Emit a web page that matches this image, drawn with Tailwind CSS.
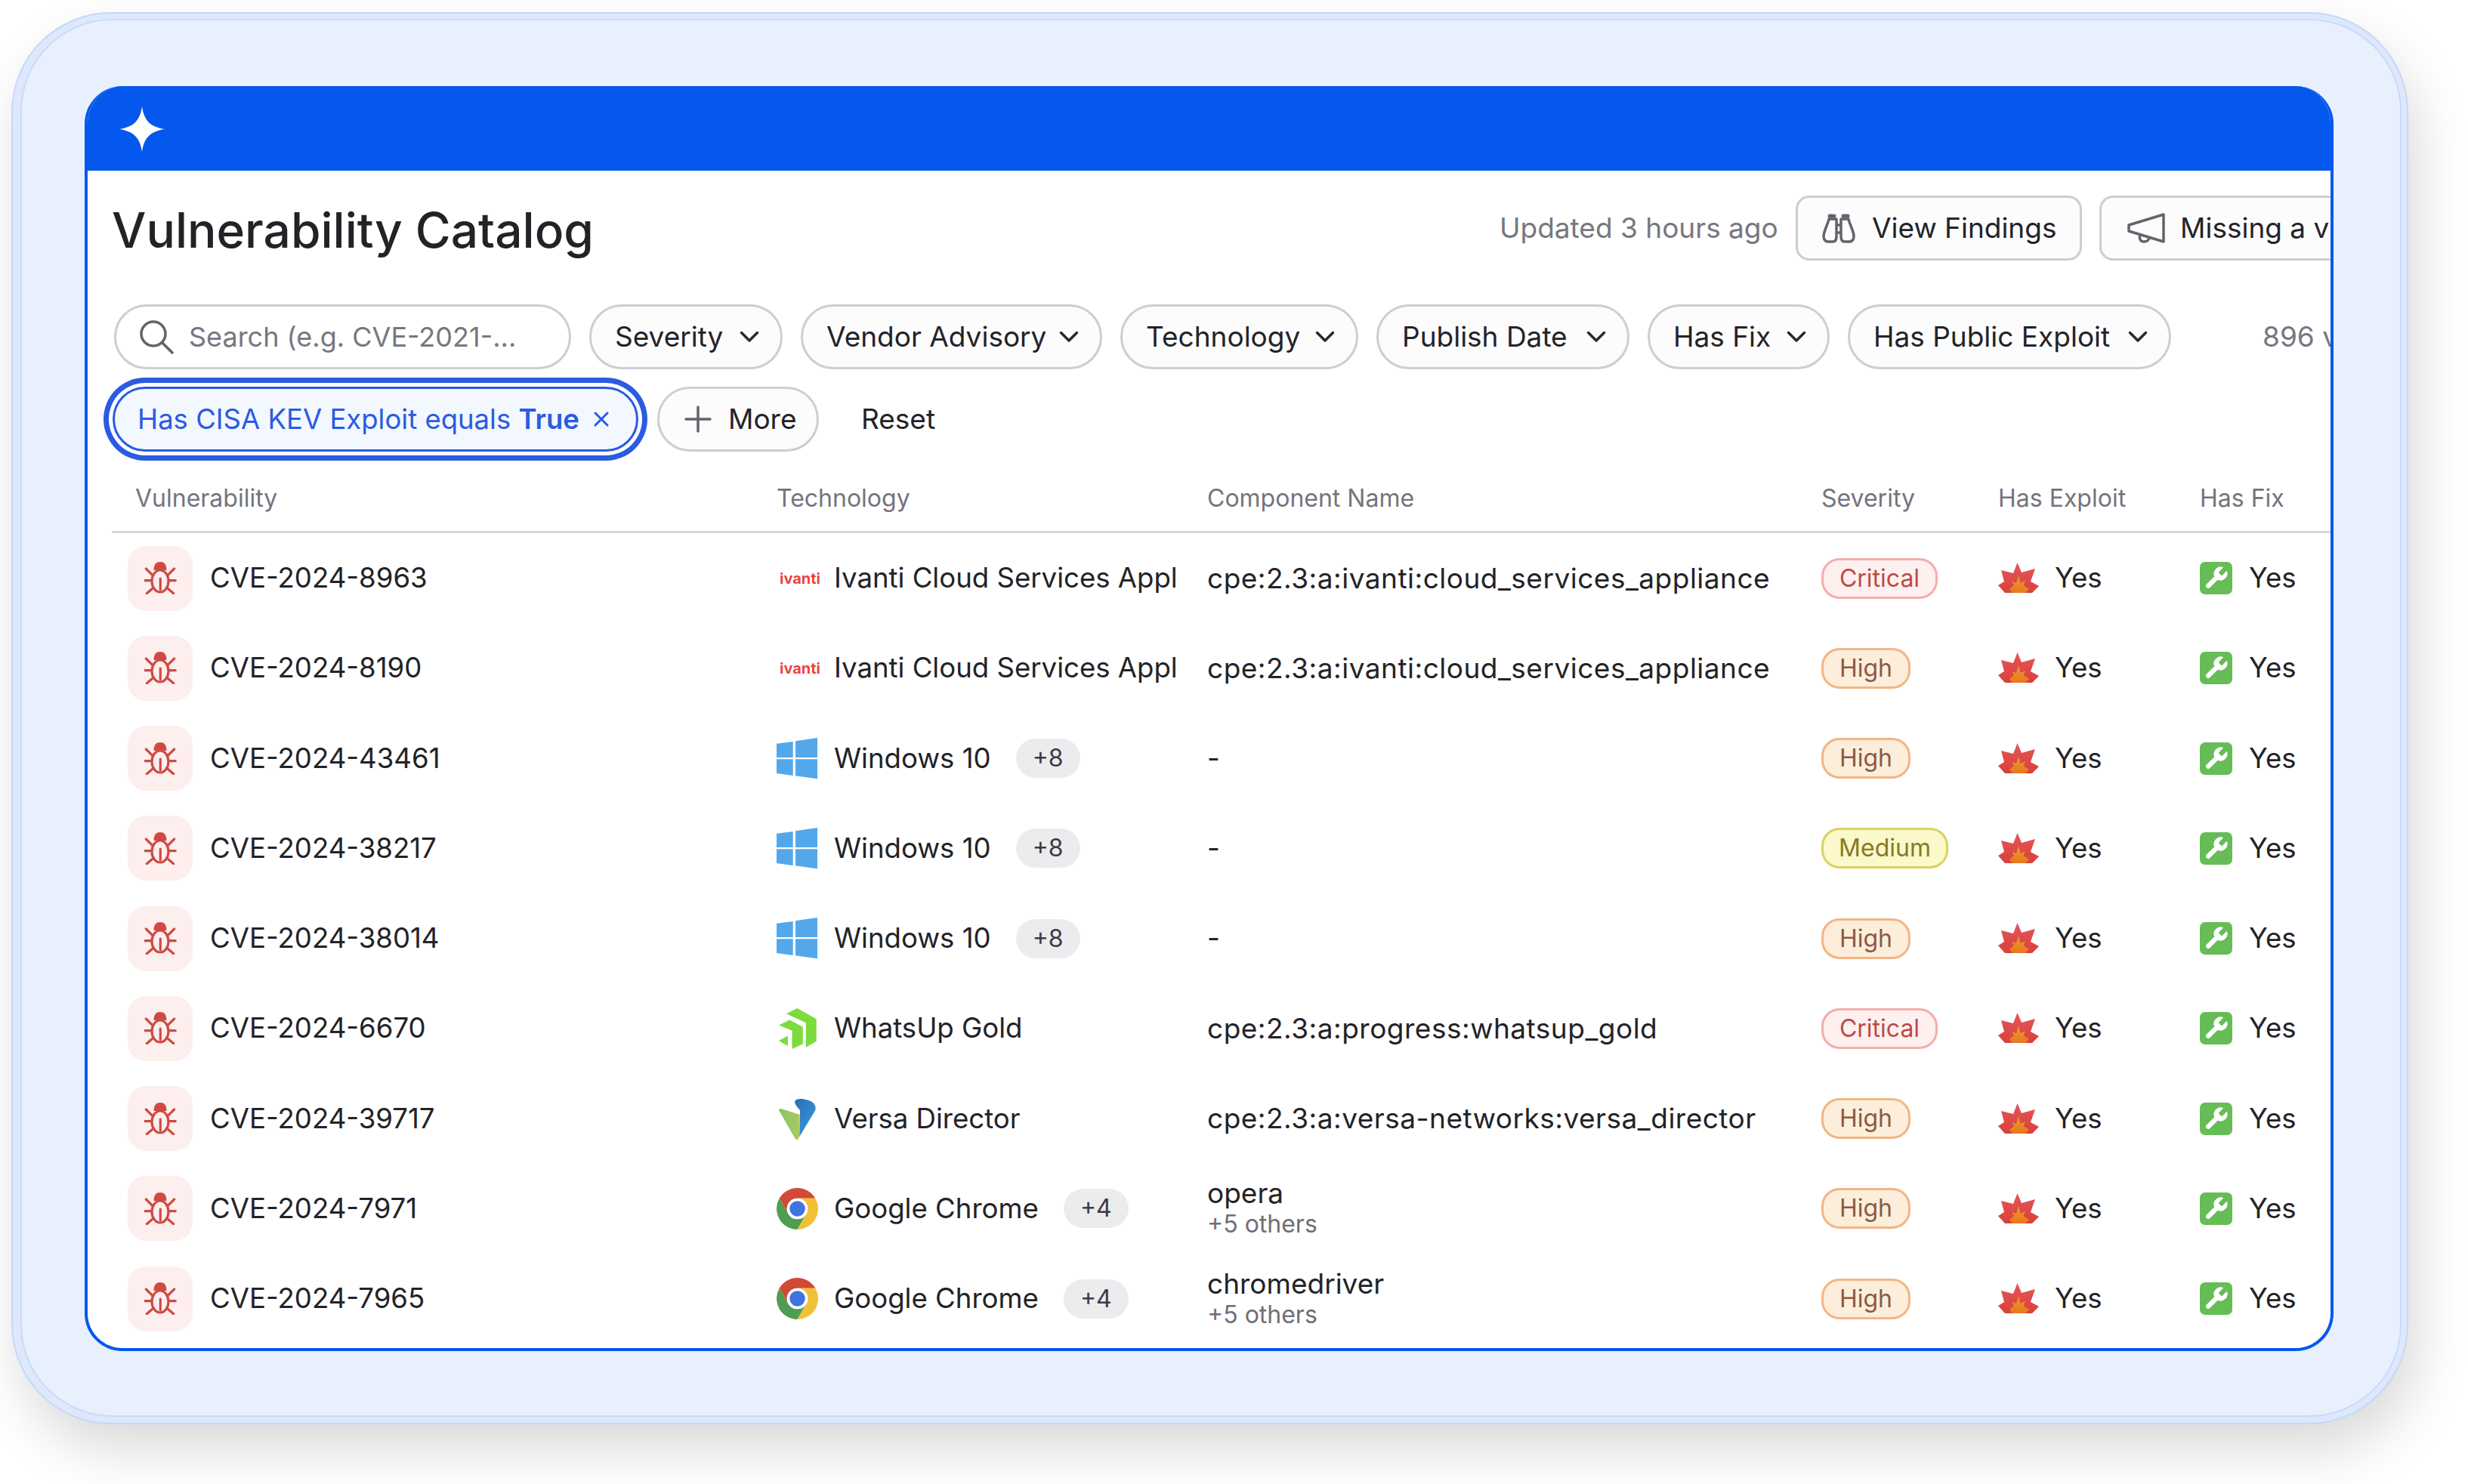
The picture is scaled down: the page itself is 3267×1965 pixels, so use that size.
<!doctype html>
<html>
<head>
<meta charset="utf-8">
<script src="https://cdn.jsdelivr.net/npm/@tailwindcss/browser@4"></script>
<title>Vulnerability Catalog</title>
</head>
<body class="bg-white">
<svg class="absolute w-0 h-0" aria-hidden="true">
  <defs>
    <linearGradient id="fl" x1="0" y1="0" x2="0" y2="1"><stop offset="0" stop-color="#e6555a"/><stop offset="1" stop-color="#d8413a"/></linearGradient>
    <linearGradient id="fi" x1="0" y1="0" x2="0" y2="1"><stop offset="0" stop-color="#e9a12a"/><stop offset="1" stop-color="#e8761f"/></linearGradient>
    <linearGradient id="vb" x1="0" y1="0" x2="1" y2="1"><stop offset="0" stop-color="#2a6cbc"/><stop offset="1" stop-color="#3d9cd9"/></linearGradient>
    <linearGradient id="vg" x1="0" y1="0" x2="1" y2="0"><stop offset="0" stop-color="#8bc45b"/><stop offset="1" stop-color="#a9c966"/></linearGradient>
    <symbol id="bug" viewBox="0 0 43 43">
      <path d="M12.500 11C12.500 3 16 0 21 0 26 0 29.500 3 29.500 11Z" fill="#cf4a44"/>
      <ellipse cx="21" cy="25.500" rx="11" ry="14.500" fill="none" stroke="#cf4a44" stroke-width="3.200"/>
      <path d="M21.300 22V37M2.300 9 10.700 17.300M39.700 9 31.300 17.300M.7 24.700H9.700M41.300 24.700H32.300M3.300 41.700 12.300 34M38.700 41.700 29.700 34" fill="none" stroke="#cf4a44" stroke-width="3.200" stroke-linecap="round"/>
    </symbol>
    <symbol id="win" viewBox="0 0 54 55">
      <path d="M0 7.700 21.700 5v21H0zM25 4.300 54 0v26H25zM0 28.300h21.700V50L0 47zM25 28.300h29v26l-29-4z" fill="#53a8ec"/>
    </symbol>
    <symbol id="flame" viewBox="0 0 54 41">
      <path d="M0 30 8 25 4 10 20 14 25.500 0 31 13 49 8 43 25 54 31 45 40H9z" fill="url(#fl)"/>
      <path d="M15 35 21 30 18.500 25 24 27 27 17 29.500 27 36 24 33.500 30 41 35 36 40H19z" fill="url(#fi)"/>
    </symbol>
    <symbol id="fix" viewBox="0 0 43 43">
      <rect width="43" height="43" rx="7" fill="#66bc55"/>
      <g transform="translate(3.500 3.500) scale(1.5)">
        <path d="M14.700 6.300a1 1 0 0 0 0 1.400l1.600 1.600a1 1 0 0 0 1.400 0l3.770-3.770a6 6 0 0 1-7.940 7.940l-6.910 6.910a2.120 2.120 0 0 1-3-3l6.910-6.910a6 6 0 0 1 7.940-7.940l-3.760 3.760z" fill="#fff"/>
      </g>
    </symbol>
    <symbol id="chrome" viewBox="0 0 48 48">
      <circle cx="24" cy="24" r="24" fill="#fff"/>
      <path d="M44.800 12A24 24 0 0 0 3.200 12L13.600 30A12 12 0 0 1 24 12Z" fill="#d04a36"/>
      <path d="M3.200 12A24 24 0 0 0 24 48L34.400 30A12 12 0 0 1 13.600 30Z" fill="#4f9d52"/>
      <path d="M24 48A24 24 0 0 0 44.800 12H24A12 12 0 0 1 34.400 30Z" fill="#f2c038"/>
      <circle cx="24" cy="24" r="12" fill="#fff"/>
      <circle cx="24" cy="24" r="9" fill="#3f74e0"/>
    </symbol>
    <symbol id="chev" viewBox="0 0 26 16">
      <path d="M2.500 2.500 13 13 23.500 2.500" fill="none" stroke="#2a2a2e" stroke-width="3.500" stroke-linecap="round" stroke-linejoin="round"/>
    </symbol>
  </defs>
</svg>

<div class="w-[3267px] h-[1965px] overflow-hidden pl-[15px] pt-[16px] font-['Inter',sans-serif] text-[#232327]">
  <div class="w-[3173px] h-[1870px] rounded-[132px] bg-[#dde8fc] border-2 border-[#c4d8f9] shadow-[12px_34px_70px_rgba(0,0,0,0.15)] pl-[10px] pr-[7px] pt-[7px] pb-[8px]">
    <div class="w-full h-full rounded-[122px] bg-[#e8f0fe] border-2 border-[#c9dbfa] pl-[83px] pr-[88px] pt-[87px] pb-[85px]">
      <div class="w-[2977px] h-[1675px] rounded-[50px] overflow-hidden bg-white flex flex-col border-[4px] border-t-0 border-[#0558ee]">
        <div class="h-[112px] shrink-0 bg-[#0558ee] -mx-[4px] pl-[46px] flex items-center">
          <svg class="w-[60px] h-[60px] mt-[2px]" viewBox="0 0 60 60"><path d="M30 0C33 20 42 27 60 30 42 33 33 40 30 60 27 40 18 33 0 30 18 27 27 20 30 0Z" fill="#fff"/></svg>
        </div>
        <div class="flex-1 flex flex-col overflow-hidden pl-[32px]">
          <!-- Title row -->
          <div class="flex items-center h-[86px] mt-[33px] shrink-0 whitespace-nowrap">
            <h1 class="text-[64px] font-medium w-[1837px] shrink-0 mt-[6px]">Vulnerability Catalog</h1>
            <span class="text-[37px] text-[#77777f] w-[392px] shrink-0">Updated 3 hours ago</span>
            <button class="h-[86px] w-[379px] shrink-0 rounded-[18px] border-[3px] border-[#cdcdd4] bg-[#fcfcfd] flex items-center pl-[32px] gap-[22px] text-[37px]">
              <svg class="w-[44px] h-[40px]" viewBox="0 0 44 40" fill="none" stroke="#63636b" stroke-width="3.500" stroke-linejoin="round"><path d="M9 8c-1 6-6 14-7 22 0 5 2 8 6 8h6c4 0 5-3 5-7V8zM35 8c1 6 6 14 7 22 0 5-2 8-6 8h-6c-4 0-5-3-5-7V8zM19 16h6v10h-6z"/><path d="M10 4h6M28 4h6" stroke-width="5" stroke-linecap="round"/></svg>
              <span>View Findings</span>
            </button>
            <button class="h-[86px] w-[400px] shrink-0 ml-[23px] rounded-l-[18px] border-[3px] border-r-0 border-[#cdcdd4] bg-[#fcfcfd] flex items-center pl-[33px] gap-[19px] text-[37px] overflow-hidden">
              <svg class="w-[52px] h-[40px] shrink-0" viewBox="0 0 52 40" fill="none" stroke="#63636b" stroke-width="3.500" stroke-linejoin="round"><path d="M49 2v36L3 24v-8zM3 16v8M18 28c-2 7 1 10 5 10s7-2 7-6"/></svg>
              <span>Missing a vulnerability?</span>
            </button>
          </div>
          <!-- Filters row -->
          <div class="flex items-center gap-[24px] mt-[58px] ml-[3px] h-[86px] shrink-0 whitespace-nowrap text-[37px]">
            <div class="w-[605px] h-[86px] shrink-0 rounded-full border-[3px] border-[#cdcdd4] bg-white flex items-center pl-[30px] gap-[20px] text-[36px] text-[#77777f]">
              <svg class="w-[46px] h-[46px] shrink-0" viewBox="0 0 46 46" fill="none" stroke="#63636b" stroke-width="3.500" stroke-linecap="round"><circle cx="19" cy="19" r="16"/><path d="M31 31 44 44"/></svg>
              <span>Search (e.g. CVE-2021-...</span>
            </div>
            <div class="w-[256px] h-[86px] shrink-0 rounded-full border-[3px] border-[#cdcdd4] bg-[#fcfcfd] flex items-center justify-between pl-[31px] pr-[28px]"><span>Severity</span><svg class="w-[26px] h-[16px]"><use href="#chev"/></svg></div>
            <div class="w-[399px] h-[86px] shrink-0 rounded-full border-[3px] border-[#cdcdd4] bg-[#fcfcfd] flex items-center justify-between pl-[31px] pr-[28px]"><span>Vendor Advisory</span><svg class="w-[26px] h-[16px]"><use href="#chev"/></svg></div>
            <div class="w-[315px] h-[86px] shrink-0 rounded-full border-[3px] border-[#cdcdd4] bg-[#fcfcfd] flex items-center justify-between pl-[31px] pr-[28px]"><span>Technology</span><svg class="w-[26px] h-[16px]"><use href="#chev"/></svg></div>
            <div class="w-[335px] h-[86px] shrink-0 rounded-full border-[3px] border-[#cdcdd4] bg-[#fcfcfd] flex items-center justify-between pl-[31px] pr-[28px]"><span>Publish Date</span><svg class="w-[26px] h-[16px]"><use href="#chev"/></svg></div>
            <div class="w-[241px] h-[86px] shrink-0 rounded-full border-[3px] border-[#cdcdd4] bg-[#fcfcfd] flex items-center justify-between pl-[31px] pr-[28px]"><span>Has Fix</span><svg class="w-[26px] h-[16px]"><use href="#chev"/></svg></div>
            <div class="w-[428px] h-[86px] shrink-0 rounded-full border-[3px] border-[#cdcdd4] bg-[#fcfcfd] flex items-center justify-between pl-[31px] pr-[28px]"><span>Has Public Exploit</span><svg class="w-[26px] h-[16px]"><use href="#chev"/></svg></div>
            <span class="ml-[97px] text-[#77777f] shrink-0">896 vulnerabilities</span>
          </div>
          <!-- Active filter row -->
          <div class="flex items-center mt-[23px] h-[86px] shrink-0 whitespace-nowrap text-[37px]">
            <div class="w-[696px] h-[86px] shrink-0 ml-px rounded-full border-[3px] border-[#2a5be2] bg-[#f3f7fe] shadow-[0_0_0_5px_#fff,0_0_0_12px_#2a5be2] flex items-center pl-[30px] gap-[18px] text-[36.5px] text-[#2a5be2]">
              <span>Has CISA KEV Exploit equals <b class="font-semibold">True</b></span>
              <svg class="w-[22px] h-[22px]" viewBox="0 0 22 22" fill="none" stroke="#2a5be2" stroke-width="3" stroke-linecap="round"><path d="M3 3 19 19M19 3 3 19"/></svg>
            </div>
            <div class="w-[214px] h-[86px] shrink-0 ml-[25px] rounded-full border-[3px] border-[#cdcdd4] bg-[#fcfcfd] flex items-center pl-[33px] gap-[22px]">
              <svg class="w-[36px] h-[36px]" viewBox="0 0 36 36" fill="none" stroke="#63636b" stroke-width="3.500" stroke-linecap="round"><path d="M18 2v32M2 18h32"/></svg>
              <span>More</span>
            </div>
            <span class="ml-[56px]">Reset</span>
          </div>
          <!-- Table -->
          <div class="mt-[17px] text-[36.6px] whitespace-nowrap">
            <div class="grid grid-cols-[880px_570px_813px_234px_267px_174px] items-center h-[91px] pt-[2px] border-b-[3px] border-[#d6d6dc] text-[32px] text-[#74747e]">
              <div class="pl-[31px]">Vulnerability</div><div>Technology</div><div>Component Name</div><div>Severity</div><div>Has Exploit</div><div>Has Fix</div>
            </div>

            <div class="grid grid-cols-[880px_570px_813px_234px_267px_174px] items-center h-[119.25px]">
              <div class="flex items-center pl-[21px] gap-[23px]"><span class="w-[86px] h-[86px] rounded-[24px] bg-[#fcefee] flex items-center justify-center"><svg class="w-[43px] h-[43px]"><use href="#bug"/></svg></span><span>CVE-2024-8963</span></div>
              <div class="flex items-center"><span class="w-[76px] text-[20px] font-bold text-[#e9473f] pl-[4px]">ivanti</span><span class="w-[457px] overflow-hidden">Ivanti Cloud Services Appl</span></div>
              <div class="text-[37px] tracking-[0.5px]">cpe:2.3:a:ivanti:cloud_services_appliance</div>
              <div class="flex items-center"><span class="inline-flex items-center justify-center w-[154px] h-[54px] rounded-[24px] border-[3px] border-[#f2aeac] bg-[#fdf0ef] text-[32px] text-[#bd4a47]">Critical</span></div>
              <div class="flex items-center gap-[21px]"><svg class="w-[54px] h-[41px]"><use href="#flame"/></svg><span>Yes</span></div>
              <div class="flex items-center gap-[22px]"><svg class="w-[43px] h-[43px]"><use href="#fix"/></svg><span>Yes</span></div>
            </div>

            <div class="grid grid-cols-[880px_570px_813px_234px_267px_174px] items-center h-[119.25px]">
              <div class="flex items-center pl-[21px] gap-[23px]"><span class="w-[86px] h-[86px] rounded-[24px] bg-[#fcefee] flex items-center justify-center"><svg class="w-[43px] h-[43px]"><use href="#bug"/></svg></span><span>CVE-2024-8190</span></div>
              <div class="flex items-center"><span class="w-[76px] text-[20px] font-bold text-[#e9473f] pl-[4px]">ivanti</span><span class="w-[457px] overflow-hidden">Ivanti Cloud Services Appl</span></div>
              <div class="text-[37px] tracking-[0.5px]">cpe:2.3:a:ivanti:cloud_services_appliance</div>
              <div class="flex items-center"><span class="inline-flex items-center justify-center w-[118px] h-[54px] rounded-[24px] border-[3px] border-[#f3b585] bg-[#fdeedb] text-[32px] text-[#8c5a43]">High</span></div>
              <div class="flex items-center gap-[21px]"><svg class="w-[54px] h-[41px]"><use href="#flame"/></svg><span>Yes</span></div>
              <div class="flex items-center gap-[22px]"><svg class="w-[43px] h-[43px]"><use href="#fix"/></svg><span>Yes</span></div>
            </div>

            <div class="grid grid-cols-[880px_570px_813px_234px_267px_174px] items-center h-[119.25px]">
              <div class="flex items-center pl-[21px] gap-[23px]"><span class="w-[86px] h-[86px] rounded-[24px] bg-[#fcefee] flex items-center justify-center"><svg class="w-[43px] h-[43px]"><use href="#bug"/></svg></span><span>CVE-2024-43461</span></div>
              <div class="flex items-center"><svg class="w-[54px] h-[55px] mr-[22px]"><use href="#win"/></svg><span>Windows 10</span><span class="ml-[33px] inline-flex items-center h-[52px] px-[22px] rounded-full bg-[#ececef] text-[32px] text-[#3c3c42]">+8</span></div>
              <div>-</div>
              <div class="flex items-center"><span class="inline-flex items-center justify-center w-[118px] h-[54px] rounded-[24px] border-[3px] border-[#f3b585] bg-[#fdeedb] text-[32px] text-[#8c5a43]">High</span></div>
              <div class="flex items-center gap-[21px]"><svg class="w-[54px] h-[41px]"><use href="#flame"/></svg><span>Yes</span></div>
              <div class="flex items-center gap-[22px]"><svg class="w-[43px] h-[43px]"><use href="#fix"/></svg><span>Yes</span></div>
            </div>

            <div class="grid grid-cols-[880px_570px_813px_234px_267px_174px] items-center h-[119.25px]">
              <div class="flex items-center pl-[21px] gap-[23px]"><span class="w-[86px] h-[86px] rounded-[24px] bg-[#fcefee] flex items-center justify-center"><svg class="w-[43px] h-[43px]"><use href="#bug"/></svg></span><span>CVE-2024-38217</span></div>
              <div class="flex items-center"><svg class="w-[54px] h-[55px] mr-[22px]"><use href="#win"/></svg><span>Windows 10</span><span class="ml-[33px] inline-flex items-center h-[52px] px-[22px] rounded-full bg-[#ececef] text-[32px] text-[#3c3c42]">+8</span></div>
              <div>-</div>
              <div class="flex items-center"><span class="inline-flex items-center justify-center w-[168px] h-[54px] rounded-[24px] border-[3px] border-[#dcd161] bg-[#fbf8c9] text-[32px] text-[#857a25]">Medium</span></div>
              <div class="flex items-center gap-[21px]"><svg class="w-[54px] h-[41px]"><use href="#flame"/></svg><span>Yes</span></div>
              <div class="flex items-center gap-[22px]"><svg class="w-[43px] h-[43px]"><use href="#fix"/></svg><span>Yes</span></div>
            </div>

            <div class="grid grid-cols-[880px_570px_813px_234px_267px_174px] items-center h-[119.25px]">
              <div class="flex items-center pl-[21px] gap-[23px]"><span class="w-[86px] h-[86px] rounded-[24px] bg-[#fcefee] flex items-center justify-center"><svg class="w-[43px] h-[43px]"><use href="#bug"/></svg></span><span>CVE-2024-38014</span></div>
              <div class="flex items-center"><svg class="w-[54px] h-[55px] mr-[22px]"><use href="#win"/></svg><span>Windows 10</span><span class="ml-[33px] inline-flex items-center h-[52px] px-[22px] rounded-full bg-[#ececef] text-[32px] text-[#3c3c42]">+8</span></div>
              <div>-</div>
              <div class="flex items-center"><span class="inline-flex items-center justify-center w-[118px] h-[54px] rounded-[24px] border-[3px] border-[#f3b585] bg-[#fdeedb] text-[32px] text-[#8c5a43]">High</span></div>
              <div class="flex items-center gap-[21px]"><svg class="w-[54px] h-[41px]"><use href="#flame"/></svg><span>Yes</span></div>
              <div class="flex items-center gap-[22px]"><svg class="w-[43px] h-[43px]"><use href="#fix"/></svg><span>Yes</span></div>
            </div>

            <div class="grid grid-cols-[880px_570px_813px_234px_267px_174px] items-center h-[119.25px]">
              <div class="flex items-center pl-[21px] gap-[23px]"><span class="w-[86px] h-[86px] rounded-[24px] bg-[#fcefee] flex items-center justify-center"><svg class="w-[43px] h-[43px]"><use href="#bug"/></svg></span><span>CVE-2024-6670</span></div>
              <div class="flex items-center"><svg class="w-[51px] h-[54px] ml-[2px] mr-[23px]" viewBox="0 0 152 163"><path d="M32 22 75 0 152 43V132L110 157V58Z" fill="#7bdc3c"/><path d="M2 68 45 47 98 75V143L55 163V90Z" fill="#7bdc3c"/><path d="M2 130 38 110V151Z" fill="#7bdc3c"/></svg><span>WhatsUp Gold</span></div>
              <div class="text-[37px] tracking-[0.5px]">cpe:2.3:a:progress:whatsup_gold</div>
              <div class="flex items-center"><span class="inline-flex items-center justify-center w-[154px] h-[54px] rounded-[24px] border-[3px] border-[#f2aeac] bg-[#fdf0ef] text-[32px] text-[#bd4a47]">Critical</span></div>
              <div class="flex items-center gap-[21px]"><svg class="w-[54px] h-[41px]"><use href="#flame"/></svg><span>Yes</span></div>
              <div class="flex items-center gap-[22px]"><svg class="w-[43px] h-[43px]"><use href="#fix"/></svg><span>Yes</span></div>
            </div>

            <div class="grid grid-cols-[880px_570px_813px_234px_267px_174px] items-center h-[119.25px]">
              <div class="flex items-center pl-[21px] gap-[23px]"><span class="w-[86px] h-[86px] rounded-[24px] bg-[#fcefee] flex items-center justify-center"><svg class="w-[43px] h-[43px]"><use href="#bug"/></svg></span><span>CVE-2024-39717</span></div>
              <div class="flex items-center"><svg class="w-[52px] h-[55px] ml-[2px] mr-[22px]" viewBox="0 0 156 165"><path d="M3 48C5 42 9 41 14 43L85 65V153L78 165C73 166 68 162 66 158Z" fill="url(#vg)"/><path d="M85 153 148 48C153 28 140 14 118 8 98 2 78 0 68 10 63 18 70 30 87 48Z" fill="url(#vb)"/></svg><span>Versa Director</span></div>
              <div class="text-[37px] tracking-[0.5px]">cpe:2.3:a:versa-networks:versa_director</div>
              <div class="flex items-center"><span class="inline-flex items-center justify-center w-[118px] h-[54px] rounded-[24px] border-[3px] border-[#f3b585] bg-[#fdeedb] text-[32px] text-[#8c5a43]">High</span></div>
              <div class="flex items-center gap-[21px]"><svg class="w-[54px] h-[41px]"><use href="#flame"/></svg><span>Yes</span></div>
              <div class="flex items-center gap-[22px]"><svg class="w-[43px] h-[43px]"><use href="#fix"/></svg><span>Yes</span></div>
            </div>

            <div class="grid grid-cols-[880px_570px_813px_234px_267px_174px] items-center h-[119.25px]">
              <div class="flex items-center pl-[21px] gap-[23px]"><span class="w-[86px] h-[86px] rounded-[24px] bg-[#fcefee] flex items-center justify-center"><svg class="w-[43px] h-[43px]"><use href="#bug"/></svg></span><span>CVE-2024-7971</span></div>
              <div class="flex items-center"><svg class="w-[55px] h-[55px] mr-[21px]"><use href="#chrome"/></svg><span>Google Chrome</span><span class="ml-[33px] inline-flex items-center h-[52px] px-[22px] rounded-full bg-[#ececef] text-[32px] text-[#3c3c42]">+4</span></div>
              <div class="flex flex-col text-[37px]"><span class="leading-[42px]">opera</span><span class="text-[32px] leading-[40px] text-[#6f6f77]">+5 others</span></div>
              <div class="flex items-center"><span class="inline-flex items-center justify-center w-[118px] h-[54px] rounded-[24px] border-[3px] border-[#f3b585] bg-[#fdeedb] text-[32px] text-[#8c5a43]">High</span></div>
              <div class="flex items-center gap-[21px]"><svg class="w-[54px] h-[41px]"><use href="#flame"/></svg><span>Yes</span></div>
              <div class="flex items-center gap-[22px]"><svg class="w-[43px] h-[43px]"><use href="#fix"/></svg><span>Yes</span></div>
            </div>

            <div class="grid grid-cols-[880px_570px_813px_234px_267px_174px] items-center h-[119.25px]">
              <div class="flex items-center pl-[21px] gap-[23px]"><span class="w-[86px] h-[86px] rounded-[24px] bg-[#fcefee] flex items-center justify-center"><svg class="w-[43px] h-[43px]"><use href="#bug"/></svg></span><span>CVE-2024-7965</span></div>
              <div class="flex items-center"><svg class="w-[55px] h-[55px] mr-[21px]"><use href="#chrome"/></svg><span>Google Chrome</span><span class="ml-[33px] inline-flex items-center h-[52px] px-[22px] rounded-full bg-[#ececef] text-[32px] text-[#3c3c42]">+4</span></div>
              <div class="flex flex-col text-[37px]"><span class="leading-[42px]">chromedriver</span><span class="text-[32px] leading-[40px] text-[#6f6f77]">+5 others</span></div>
              <div class="flex items-center"><span class="inline-flex items-center justify-center w-[118px] h-[54px] rounded-[24px] border-[3px] border-[#f3b585] bg-[#fdeedb] text-[32px] text-[#8c5a43]">High</span></div>
              <div class="flex items-center gap-[21px]"><svg class="w-[54px] h-[41px]"><use href="#flame"/></svg><span>Yes</span></div>
              <div class="flex items-center gap-[22px]"><svg class="w-[43px] h-[43px]"><use href="#fix"/></svg><span>Yes</span></div>
            </div>
          </div>
        </div>
      </div>
    </div>
  </div>
</div>
</body>
</html>
